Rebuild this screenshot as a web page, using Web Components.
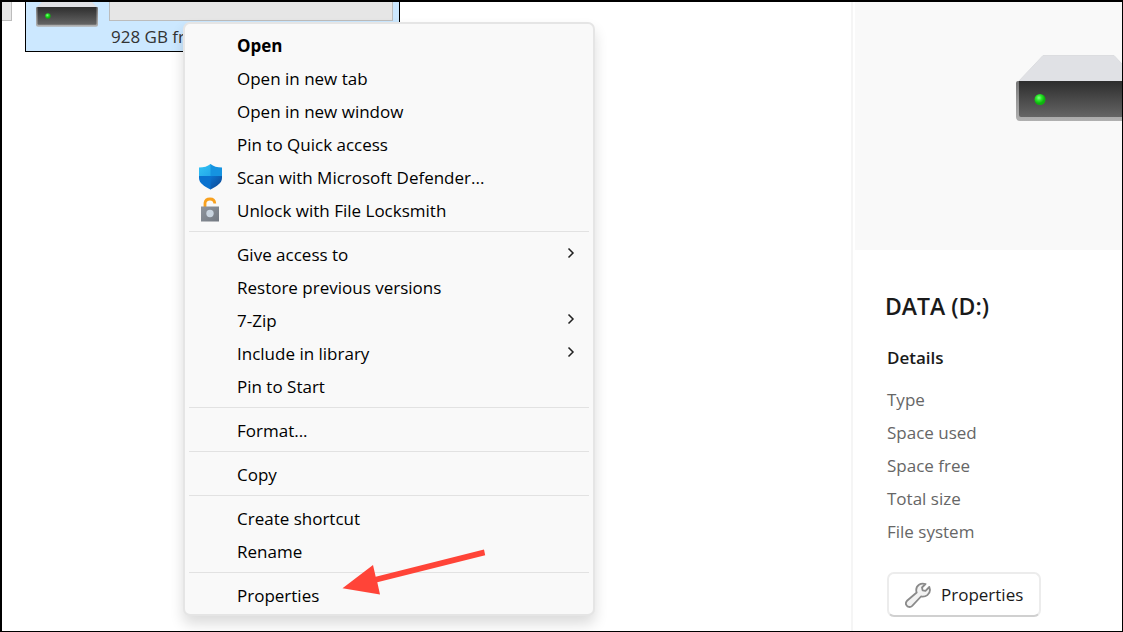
<!DOCTYPE html>
<html lang="en">
<head>
<meta charset="utf-8">
<meta name="viewport" content="width=device-width, initial-scale=1">
<title>This PC</title>
<style>
  html, body { margin: 0; }
  body { font: 17px/33px "Open Sans", "Noto Sans", sans-serif; color: #1a1a1a; background: #fff; }
</style>
</head>
<body>
<explorer-window>
  <drive-view slot="files">
    <drive-tile partial></drive-tile>
    <drive-tile selected>928 GB free</drive-tile>
  </drive-view>
  <details-pane slot="details" heading="DATA (D:)">
    <detail-row>Type</detail-row>
    <detail-row>Space used</detail-row>
    <detail-row>Space free</detail-row>
    <detail-row>Total size</detail-row>
    <detail-row>File system</detail-row>
  </details-pane>
  <context-menu slot="overlay">
    <menu-item strong>Open</menu-item>
    <menu-item>Open in new tab</menu-item>
    <menu-item>Open in new window</menu-item>
    <menu-item>Pin to Quick access</menu-item>
    <menu-item icon="shield">Scan with Microsoft Defender...</menu-item>
    <menu-item icon="lock">Unlock with File Locksmith</menu-item>
    <menu-divider></menu-divider>
    <menu-item submenu>Give access to</menu-item>
    <menu-item>Restore previous versions</menu-item>
    <menu-item submenu>7-Zip</menu-item>
    <menu-item submenu>Include in library</menu-item>
    <menu-item>Pin to Start</menu-item>
    <menu-divider></menu-divider>
    <menu-item>Format...</menu-item>
    <menu-divider></menu-divider>
    <menu-item>Copy</menu-item>
    <menu-divider></menu-divider>
    <menu-item>Create shortcut</menu-item>
    <menu-item>Rename</menu-item>
    <menu-divider></menu-divider>
    <menu-item>Properties</menu-item>
  </context-menu>
  <pointer-arrow slot="overlay"></pointer-arrow>
</explorer-window>

<script>
const define = (name, render) => customElements.define(name, class extends HTMLElement {
  constructor() {
    super();
    this.attachShadow({ mode: "open" });
  }
  connectedCallback() {
    this.shadowRoot.innerHTML = render(this);
  }
});

define("explorer-window", () => `
  <style>
    :host { display: flex; position: relative; box-sizing: border-box; min-height: 100vh; overflow: hidden;
      border: solid #000; border-width: 2px 1px 1px 2px; }
    main { flex: 1; min-width: 0; }
    aside { display: flex; flex: 0 0 271px; min-width: 0; }
  </style>
  <main><slot name="files"></slot></main>
  <aside><slot name="details"></slot></aside>
  <slot name="overlay"></slot>`);

define("drive-view", () => `
  <style>:host { display: flex; align-items: flex-start; gap: 13px; }</style>
  <slot></slot>`);

define("drive-icon", () => `
  <style>:host { display: block; flex: none; } svg { display: block; width: 100%; }</style>
  <svg viewBox="0 0 125 66" aria-hidden="true">
    <defs>
      <linearGradient id="front" x2="0" y2="1"><stop stop-color="#2d2d2d"/><stop offset="1" stop-color="#656565"/></linearGradient>
      <linearGradient id="rim" x2="0" y2="1"><stop stop-color="#777"/><stop offset=".5" stop-color="#999"/><stop offset="1" stop-color="#b0b0b0"/></linearGradient>
      <radialGradient id="led" cx=".4" cy=".35"><stop stop-color="#8f8"/><stop offset=".5" stop-color="#2be82b"/><stop offset="1" stop-color="#0db50d"/></radialGradient>
    </defs>
    <path d="M2 27 27 0.500H98L123 27Z" fill="#e0e1e5" stroke="#dcdde0"/>
    <path d="M2 26H123Q125 26 125 28V62Q125 66 121 66H4Q0 66 0 62V28Q0 26 2 26Z" fill="url(#rim)"/>
    <path d="M3 26H122V60Q122 62 120 62H5Q3 62 3 60Z" fill="url(#front)"/>
    <circle cx="24" cy="44.500" r="5.500" fill="url(#led)"/>
  </svg>`);

define("drive-tile", el => el.hasAttribute("partial") ? `
  <style>:host { display: block; box-sizing: border-box; width: 10px; height: 19px; background: #e6e6e6;
    border: solid #bcbcbc; border-width: 0 1px 1px 0; }</style>` : `
  <style>
    :host { display: flex; align-items: flex-start; gap: 11px; box-sizing: border-box; width: 375px; padding: 0 6px 2px 10px;
      background: #cce8ff; border: 1px solid #000; border-top: 0; }
    drive-icon { width: 62px; margin-top: -8px; }
    .info { flex: 1; }
    .bar { box-sizing: border-box; height: 19px; background: #e6e6e6; border: 1px solid #bcbcbc; border-top: 0; }
    .text { padding: 4px 0 0 2px; line-height: 24px; color: #333; white-space: nowrap; }
  </style>
  <drive-icon></drive-icon>
  <div class="info"><div class="bar"></div><div class="text"><slot></slot></div></div>`);

define("details-pane", el => `
  <style>
    :host { display: block; flex: 1; min-width: 0; border-left: 2px solid #f5f5f5; }
    .preview { box-sizing: border-box; height: 248px; margin-left: 2px; padding: 53px 0 0 161px; overflow: hidden; background: #f9f9f9; }
    .preview drive-icon { width: 125px; }
    .body { padding: 40px 16px 12px 34px; }
    h2 { margin: 0 0 19px -2px; font-size: 23px; line-height: 32px; font-weight: 600; }
    h3 { margin: 0 0 9px; font-size: 17px; line-height: 33px; font-weight: 600; }
    .rows { margin-bottom: 24px; }
    button { display: flex; align-items: center; gap: 10px; height: 45px; padding: 0 16px; font: inherit; color: inherit;
      background: #fff; border: 2px solid #ececec; border-bottom-color: #d0d0d0; border-radius: 7px; }
    svg { width: 26px; height: 26px; }
  </style>
  <div class="preview"><drive-icon></drive-icon></div>
  <div class="body">
    <h2>${el.getAttribute("heading")}</h2>
    <h3>Details</h3>
    <div class="rows" role="list"><slot></slot></div>
    <button type="button">
      <svg viewBox="0 0 26 26" fill="#f2f2f2" stroke="#8a8a8a" stroke-width="1.800" stroke-linejoin="round" aria-hidden="true">
        <path d="M20.500 2C15.500 .4 11.200 3.500 11.200 8Q11.200 9.500 11.700 10.500L2 18.800C-.4 21.500 1.500 25 4.500 25Q6 25 7.200 23.800L16 14.500C21 15.500 25 12 25 8L24.300 5L20.500 8.800L17.600 8.300L17 5.500Z"/>
      </svg>Properties</button>
  </div>`);

define("detail-row", el => {
  el.setAttribute("role", "listitem");
  return `<style>:host { display: block; color: #666; }</style><slot></slot>`;
});

define("context-menu", el => {
  el.setAttribute("role", "menu");
  return `
  <style>
    :host { display: block; position: absolute; top: 20px; left: 181px; box-sizing: border-box; width: 412px; padding: 5px 0 2px;
      background: #f9f9f9; border: 2px solid #e5e5e5; border-radius: 7px; box-shadow: 0 8px 14px rgba(0, 0, 0, .14); color: #000; }
  </style>
  <slot></slot>`;
});

const icons = {
  shield: `<svg width="26" height="26" viewBox="0 0 26 26" aria-hidden="true">
    <defs>
      <linearGradient id="a" x2="1" y2="1"><stop stop-color="#35c5f4"/><stop offset="1" stop-color="#22a7ea"/></linearGradient>
      <linearGradient id="b" x2="1" y2="1"><stop stop-color="#0b74d1"/><stop offset="1" stop-color="#0f3f86"/></linearGradient>
      <clipPath id="s"><path d="M12.500 0C9.500 2.500 6 3.500 1 3.500V14C1 19 6 22 12.500 25.500C19 22 24 19 24 14V3.500C19 3.500 15.500 2.500 12.500 0Z"/></clipPath>
    </defs>
    <g clip-path="url(#s)"><path d="M0 0H13V12H0Z" fill="url(#a)"/><path d="M12.500 0H26V12H12.500Z" fill="#1593e0"/>
    <path d="M0 12H13V26H0Z" fill="#0a72cf"/><path d="M12.500 12H26V26H12.500Z" fill="url(#b)"/></g></svg>`,
  lock: `<svg width="20" height="26" viewBox="0 0 20 26" aria-hidden="true">
    <defs><linearGradient id="m" x2="1" y2="1"><stop stop-color="#8f959d"/><stop offset="1" stop-color="#737982"/></linearGradient></defs>
    <path d="M4 10V6Q4.500 2 9 2T13.800 6.500" fill="none" stroke="#f8a11f" stroke-width="2.800"/>
    <path d="M0 9.500H18V24.500H0Z" fill="url(#m)"/><circle cx="9" cy="16.500" r="3.700" fill="#c9d4df"/></svg>`
};

define("menu-item", el => `
  <style>
    :host { display: block; }
    button { display: flex; align-items: center; gap: 12px; width: 100%; height: 33px; padding: 0 18px 0 12px; border: 0;
      background: none; font: inherit; font-weight: ${el.hasAttribute("strong") ? 700 : 400}; color: inherit; text-align: left; }
    .icon { display: flex; justify-content: center; flex: none; width: 28px; padding-bottom: 2px; }
    .label { flex: 1; }
    .more { padding-bottom: 4px; }
    svg { display: block; }
  </style>
  <button type="button" role="menuitem">
    <span class="icon">${icons[el.getAttribute("icon")] || ""}</span>
    <span class="label"><slot></slot></span>
    ${el.hasAttribute("submenu") ? `<svg class="more" width="8" height="12" viewBox="0 0 8 12" fill="none" stroke="#222" stroke-width="1.500" aria-hidden="true"><path d="M1.500 1.500 6 6 1.500 10.500"/></svg>` : ""}
  </button>`);

define("menu-divider", el => {
  el.setAttribute("role", "separator");
  return `<style>:host { display: block; height: 1px; margin: 4px 4px 6px; background: #e2e2e2; }</style>`;
});

define("pointer-arrow", () => `
  <style>:host { display: block; position: absolute; top: 546px; left: 340px; } svg { display: block; }</style>
  <svg width="146" height="50" viewBox="342 548 146 50" fill="#ff4438" aria-hidden="true">
    <path d="M342.500 588.300 373 565 375.700 576.800 484 549.500 485.200 555.200 377.300 582.300 380 594.500Z"/>
  </svg>`);
</script>
</body>
</html>
